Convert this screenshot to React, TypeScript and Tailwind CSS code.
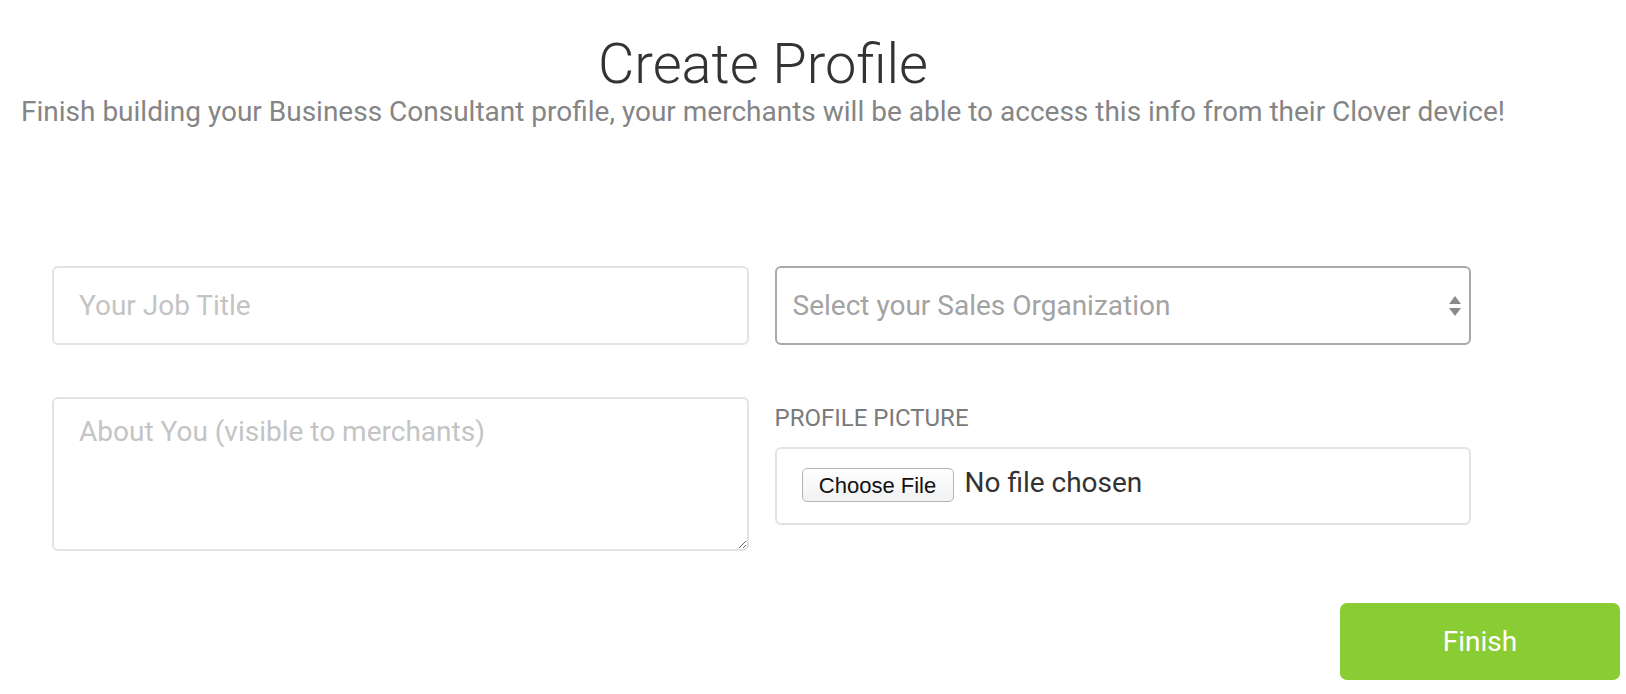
export default function App() {
  return (
    <div className="min-h-screen bg-white" style={{ fontFamily: 'Roboto, "Open Sans", sans-serif' }}>
      {/* Header */}
      <div className="w-[1484px] ml-[21px] pt-[32px]">
        <h1 className="text-center text-[56px] leading-[64px] font-light text-[#333]">Create Profile</h1>
        <p className="text-[28px] leading-[32px] text-[#858585] whitespace-nowrap">
          Finish building your Business Consultant profile, your merchants will be able to access this info from their Clover device!
        </p>
      </div>

      {/* Form */}
      <div className="ml-[52px] w-[1419px] mt-[138px] grid grid-cols-2 gap-x-[26px]">
        <input
          type="text"
          placeholder="Your Job Title"
          className="h-[79px] px-[25px] text-[28px] text-[#333] border-2 border-[#e3e3e3] rounded-[6px] outline-none placeholder:text-[#c4c4c4]"
        />
        <div className="h-[79px] pl-[16px] pr-[6px] flex items-center justify-between border-2 border-[#a9a9a9] rounded-[6px]">
          <span className="text-[28px] text-[#a3a3a3]">Select your Sales Organization</span>
          <svg width="16" height="26" viewBox="0 0 16 26" className="mt-[1px]">
            <path d="M8 3 L14 11 L2 11 Z" fill="#8a8a8a" />
            <path d="M8 23 L14 15 L2 15 Z" fill="#8a8a8a" />
          </svg>
        </div>

        <textarea
          placeholder="About You (visible to merchants)"
          className="mt-[52px] h-[154px] px-[25px] pt-[12px] text-[28px] text-[#333] border-2 border-[#e3e3e3] rounded-[6px] outline-none placeholder:text-[#c4c4c4]"
        />
        <div className="mt-[52px] flex flex-col">
          <div className="h-[50px] pt-[9px] text-[24px] leading-[24px] text-[#7a7a7a]">PROFILE PICTURE</div>
          <div className="h-[78px] px-[25px] flex items-center gap-[11px] border-2 border-[#e3e3e3] rounded-[6px]">
            <button
              className="h-[34px] w-[152px] -mt-[3px] text-[22px] text-[#111] bg-gradient-to-b from-white to-[#f1f1f1] border border-[#b5b5b5] rounded-[5px]"
              style={{ fontFamily: '"Liberation Sans", Arial, sans-serif' }}
            >
              Choose File
            </button>
            <span className="text-[28px] text-[#333] -mt-[7px]">No file chosen</span>
          </div>
        </div>
      </div>

      <div className="flex justify-end pr-[6px] mt-[52px]">
        <button className="w-[280px] h-[77px] bg-[#8acc33] rounded-[7px] text-white text-[28px]">Finish</button>
      </div>
    </div>
  );
}
